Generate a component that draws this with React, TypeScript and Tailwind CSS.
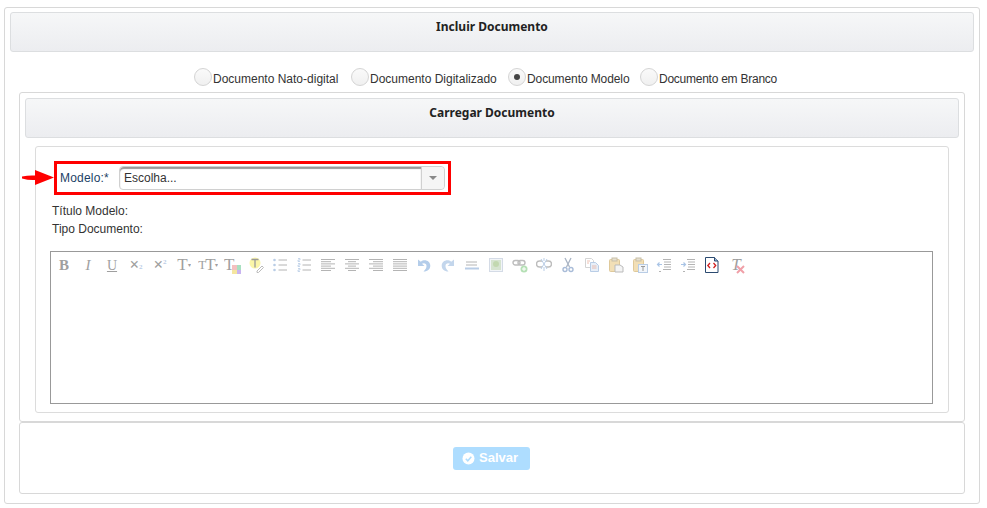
import React from "react";

const radios = [
	{ label: "Documento Nato-digital", checked: false, box: "w-[157px]", text: "" },
	{ label: "Documento Digitalizado", checked: false, box: "w-[157px]", text: "" },
	{ label: "Documento Modelo", checked: true, box: "w-[132px]", text: "tracking-[-0.1px]" },
	{ label: "Documento em Branco", checked: false, box: "w-[140px]", text: "tracking-[-0.25px]" },
];

function Glyph({ children, className = "" }: { children: React.ReactNode; className?: string }) {
	return <span className={`flex w-4 h-4 items-center justify-center font-['Liberation_Serif',serif] text-[#777] opacity-70 ${className}`}>{children}</span>;
}

function Icon({ children }: { children: React.ReactNode }) {
	return (
		<svg width="16" height="16" viewBox="0 0 16 16" fill="none" className="shrink-0">
			{children}
		</svg>
	);
}

const lineStroke = "#b4b4b4";

function Lines({ rows }: { rows: [number, number][] }) {
	return (
		<Icon>
			{rows.map(([x1, x2], i) => (
				<path key={i} d={`M${x1} ${2.5 + i * 2.2}H${x2}`} stroke={lineStroke} strokeWidth="1" />
			))}
		</Icon>
	);
}

function ListIcon({ numbered }: { numbered?: boolean }) {
	return (
		<Icon>
			{[3, 8, 13].map((y) => (
				<g key={y}>
					{numbered ? <path d={`M2 ${y - 1.5}h2v1.5h-2v1.5h2`} stroke="#b9cde6" strokeWidth="0.8" /> : <circle cx="2.5" cy={y} r="1.3" fill="#b9cde6" />}
					<path d={`M6.5 ${y}H15`} stroke={lineStroke} />
				</g>
			))}
		</Icon>
	);
}

function Toolbar() {
	return (
		<div className="flex items-center gap-2 h-4">
			<Glyph className="font-bold text-[15px]">B</Glyph>
			<Glyph className="italic text-[15px]">I</Glyph>
			<Glyph className="text-[14px] underline">U</Glyph>
			<Glyph className="text-[17px] font-bold">
				×<sub className="text-[7px] text-[#9db8dc]">2</sub>
			</Glyph>
			<Glyph className="text-[17px] font-bold">
				×<sup className="text-[7px] text-[#9db8dc]">2</sup>
			</Glyph>
			<Glyph className="text-[17px]">
				T<span className="text-[6px]">▾</span>
			</Glyph>
			<Glyph className="text-[13px] tracking-[-1px]">
				T<span className="text-[17px]">T</span>
				<span className="text-[6px] tracking-normal">▾</span>
			</Glyph>
			<span className="relative w-4 h-4">
				<Glyph className="text-[17px] justify-start">T</Glyph>
				<span className="absolute right-[-1px] bottom-[-1px] grid grid-cols-2 w-[9px] h-[9px]">
					<span className="bg-[#f3c0c0]" />
					<span className="bg-[#a8e0c0]" />
					<span className="bg-[#f5e6a0]" />
					<span className="bg-[#c8b4f0]" />
				</span>
			</span>
			<Icon>
				<circle cx="7" cy="6" r="5.5" fill="#fbf6a8" />
				<path d="M3.5 2.5h7M7 2.5v8" stroke="#9a9a9a" strokeWidth="1.3" />
				<path d="M9 14l5-5 1.5 1.5-5 5H9z" fill="#fff" stroke="#bbb" />
			</Icon>
			<ListIcon />
			<ListIcon numbered />
			<Lines rows={[[1, 15], [1, 11], [1, 15], [1, 11], [1, 15], [1, 11]]} />
			<Lines rows={[[1, 15], [4, 12], [1, 15], [4, 12], [1, 15], [4, 12]]} />
			<Lines rows={[[1, 15], [5, 15], [1, 15], [5, 15], [1, 15], [5, 15]]} />
			<Lines rows={[[1, 15], [1, 15], [1, 15], [1, 15], [1, 15], [1, 15]]} />
			<Icon>
				<path d="M2 2.500v6.500h6.500L6 6.800c2-1.300 4.500-.3 4.500 2.200 0 2-1 3.500-3 5.500 4.500 0 6.800-2.800 6.800-5.800 0-4.800-5.800-7-9.500-4z" fill="#b4cdea" />
			</Icon>
			<Icon>
				<path d="M14 2.500v6.500H7.500L10 6.800c-2-1.300-4.500-.3-4.500 2.200 0 2 1 3.500 3 5.500-4.500 0-6.800-2.800-6.800-5.800 0-4.800 5.800-7 9.500-4z" fill="#c3d6ec" />
			</Icon>
			<Icon>
				<path d="M2 5H13M2 8H13" stroke={lineStroke} />
				<path d="M1 11.500H15" stroke="#b9cde6" strokeWidth="2" />
			</Icon>
			<Icon>
				<rect x="1.500" y="1.500" width="13" height="13" fill="#f2f5f8" stroke="#d4dbe6" />
				<rect x="3" y="3" width="10" height="10" fill="#d6e4d0" />
				<circle cx="8" cy="7" r="3" fill="#c2d8b0" />
			</Icon>
			<Icon>
				<rect x="1" y="3.500" width="7" height="4.500" rx="2.200" stroke="#bdbdbd" strokeWidth="1.400" />
				<rect x="6" y="3.500" width="7" height="4.500" rx="2.200" stroke="#bdbdbd" strokeWidth="1.400" />
				<circle cx="12" cy="12" r="3.500" fill="#b5e0b5" />
				<path d="M12 10v4M10 12h4" stroke="#fff" />
			</Icon>
			<Icon>
				<path d="M6 4H3.500a2.500 2.500 0 0 0 0 6H6M10 4h2.500a2.500 2.500 0 0 1 0 6H10" stroke="#bdbdbd" strokeWidth="1.400" />
				<path d="M8 1v3M8 10v4M5 2l6 10M11 2L5 12" stroke="#b9cde6" />
			</Icon>
			<Icon>
				<path d="M5 1l4.500 9M11 1L6.500 10" stroke="#a9b4c4" strokeWidth="1.300" />
				<circle cx="5" cy="12.500" r="2" stroke="#a9bcd8" strokeWidth="1.400" />
				<circle cx="11" cy="12.500" r="2" stroke="#a9bcd8" strokeWidth="1.400" />
			</Icon>
			<Icon>
				<path d="M1.500 1.500h6l2 2v7h-8z" fill="#fff" stroke="#d4d4d4" />
				<path d="M6.500 5.500h5l3 3v6h-8z" fill="#e8eff8" stroke="#b9cde6" />
				<path d="M3 4h3M3 6h2M8 9h4.500M8 11h4.500" stroke="#e8b0a0" strokeWidth="0.800" />
			</Icon>
			<Icon>
				<rect x="1.500" y="2.500" width="10" height="12" rx="1" fill="#f2dfb6" stroke="#dfc99a" />
				<rect x="4" y="1" width="5" height="3" fill="#e6e0d0" stroke="#c8bfa8" />
				<path d="M7 8h5l3 2v5H7z" fill="#f4f4f4" stroke="#bbb" />
			</Icon>
			<Icon>
				<rect x="1.500" y="2.500" width="10" height="12" rx="1" fill="#f2dfb6" stroke="#dfc99a" />
				<rect x="4" y="1" width="5" height="3" fill="#e6e0d0" stroke="#c8bfa8" />
				<rect x="6.500" y="7.500" width="9" height="8" fill="#f2f6fb" stroke="#b9cde6" />
				<path d="M9 9.500h4M11 9.500v4.500" stroke="#9a9a9a" />
			</Icon>
			<Icon>
				<path d="M7 2.500H15M8 5H15M8 7.500H15M8 10H15M7 12.500H15M3 14.500h2" stroke={lineStroke} />
				<path d="M6 7.500H1.500M3.500 5.500l-2 2 2 2" stroke="#a9c4e6" strokeWidth="1.200" />
			</Icon>
			<Icon>
				<path d="M7 2.500H15M8 5H15M8 7.500H15M8 10H15M7 12.500H15M3 14.500h2" stroke={lineStroke} />
				<path d="M1 7.500H5.500M3.500 5.500l2 2-2 2" stroke="#a9c4e6" strokeWidth="1.200" />
			</Icon>
			<Icon>
				<path d="M1.500 .5h9l3.500 3.500v11.500H1.500z" fill="#fff" stroke="#2b4a70" />
				<path d="M6 6L3.800 8.500 6 11M9.500 6l2.200 2.500L9.500 11" stroke="#d02020" strokeWidth="1.300" />
				<path d="M10.500 .5v3.500h3.500" fill="#9fb6d2" stroke="#2b4a70" />
			</Icon>
			<span className="relative w-4 h-4">
				<Glyph className="italic text-[17px]">T</Glyph>
				<svg width="9" height="9" viewBox="0 0 9 9" className="absolute right-[-1px] bottom-[-1px]">
					<path d="M1 1l7 7M8 1L1 8" stroke="#f0a0a8" strokeWidth="2" />
				</svg>
			</span>
		</div>
	);
}

function Heading({ title }: { title: string }) {
	return <div className="h-[40px] rounded-[3px] border border-[#dcdee0] bg-gradient-to-b from-[#f6f7f8] to-[#ecedf0] pt-[6px] text-center font-['Noto_Sans',sans-serif] text-[12px] leading-[16px] font-bold text-[#222]">{title}</div>;
}

export default function App() {
	return (
		<div className="w-[987px] h-[508px] bg-white pt-[7px] pl-[4px] font-['Liberation_Sans',sans-serif] text-[12px] text-[#333]">
			<div className="relative w-[976px] h-[497px] rounded-[3px] border border-[#d8d8d8] pt-[4px] px-[5px]">
				<Heading title="Incluir Documento" />

				<div className="mt-[15px] flex h-[19px] items-center pl-[184px]">
					{radios.map((r) => (
						<label key={r.label} className={`flex items-center gap-[1px] whitespace-nowrap ${r.box}`}>
							<span className="flex h-[18px] w-[18px] items-center justify-center rounded-full border border-[#d4d4d4] bg-gradient-to-b from-[#fafafa] to-[#f0f0f0]">{r.checked && <span className="h-[6px] w-[6px] rounded-full bg-[#444]" />}</span>
							<span className={`mt-[4px] leading-[16px] ${r.text}`}>{r.label}</span>
						</label>
					))}
				</div>

				<div className="mx-[9px] mt-[6px] h-[330px] rounded-[3px] border border-[#d8d8d8] px-[5px] pt-[5px]">
					<Heading title="Carregar Documento" />

					<div className="mt-[8px] ml-[10px] mr-[10px] h-[267px] rounded-[3px] border border-[#dcdcdc] pt-[14px] pl-[14px] pr-[15px]">
						<div className="ml-[4px] flex h-[34px] w-[397px] items-center border-[3px] border-[#ff0000] pl-[3px]">
							<span className="w-[59px] text-[#1c3f66] tracking-[0.2px]">Modelo:*</span>
							<div className="flex h-[24px] w-[326px] rounded-[4px] border border-[#d0d0d0] bg-white">
								<span className="flex-1 rounded-l-[4px] pl-[4px] leading-[22px] shadow-[inset_0_2px_1px_#999]">Escolha...</span>
								<span className="flex w-[23px] items-center justify-center rounded-r-[4px] border-l border-[#d0d0d0] bg-[#f5f5f5]">
									<span className="h-0 w-0 border-x-[4px] border-t-[4px] border-x-transparent border-t-[#888]" />
								</span>
							</div>
						</div>

						<div className="mt-[7px] leading-[18px]">
							<div className="ml-[2px]">Título Modelo:</div>
							<div className="ml-[2px]">Tipo Documento:</div>
						</div>

						<div className="mt-[13px] h-[153px] border border-[#999] pt-[5px] pl-[5px]">
							<Toolbar />
						</div>
					</div>
				</div>

				<div className="mx-[9px] flex h-[72px] items-center rounded-[3px] border border-[#d8d8d8] pl-[433px]">
					<button className="flex h-[23px] w-[77px] items-center gap-[4px] rounded-[3px] bg-[#aeddff] pl-[9px] text-[13px] font-bold text-white">
						<svg width="13" height="13" viewBox="0 0 13 13">
							<circle cx="6.500" cy="6.500" r="6" fill="#fff" />
							<path d="M3.800 6.800l2 2 3.500-4" stroke="#aeddff" strokeWidth="1.500" fill="none" />
						</svg>
						Salvar
					</button>
				</div>

				<svg width="34" height="16" viewBox="0 0 34 16" className="absolute left-[17px] top-[162px]">
					<path d="M0 6.500Q7 5 13 5.500L13 0 32 7.500 13 15V10Q7 10.500 0 8.500z" fill="#ff0000" />
				</svg>
			</div>
		</div>
	);
}
